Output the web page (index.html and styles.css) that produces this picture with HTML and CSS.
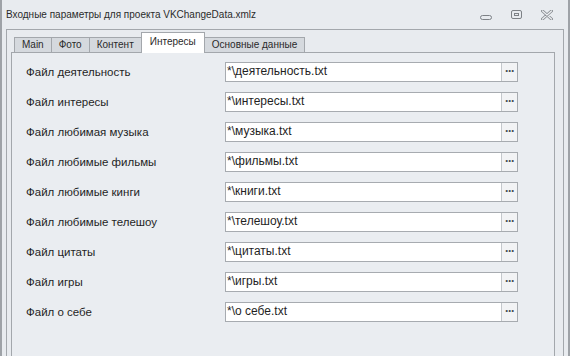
FILE: index.html
```html
<!DOCTYPE html>
<html lang="ru">
<head>
  <meta charset="UTF-8">
  <title>Входные параметры для проекта VKChangeData.xmlz</title>
  <link rel="stylesheet" href="styles.css">
</head>
<body>

<div class="window">
  <div class="titlebar">
    <span class="title">Входные параметры для проекта VKChangeData.xmlz</span>
    <div class="controls">
      <svg class="ctl ctl-min" width="12" height="6" viewBox="0 0 12 6">
        <rect x="0.5" y="0.5" width="11" height="4" rx="2" fill="none" stroke="#7d8186"/>
      </svg>
      <svg class="ctl ctl-max" width="11" height="9" viewBox="0 0 11 9">
        <rect x="0.5" y="0.5" width="10" height="8" rx="1.5" fill="none" stroke="#7d8186"/>
        <rect x="3.5" y="3.5" width="4" height="2" fill="none" stroke="#7d8186"/>
      </svg>
      <svg class="ctl ctl-close" width="12" height="10" viewBox="0 0 12 10">
        <path d="M1.5 1 L10.5 9 M10.5 1 L1.5 9" stroke="#8a8e93" stroke-width="3" stroke-linecap="round"/>
        <path d="M1.5 1 L10.5 9 M10.5 1 L1.5 9" stroke="#eef0f3" stroke-width="1.2" stroke-linecap="round"/>
      </svg>
    </div>
  </div>

  <div class="frame">
    <div class="tabs">
      <div class="tab">Main</div>
      <div class="tab">Фото</div>
      <div class="tab">Контент</div>
      <div class="tab active">Интересы</div>
      <div class="tab">Основные данные</div>
    </div>

    <div class="page">
      <div class="row">
        <span class="label">Файл деятельность</span>
        <div class="field"><span class="value">*\деятельность.txt</span><span class="browse">···</span></div>
      </div>
      <div class="row">
        <span class="label">Файл интересы</span>
        <div class="field"><span class="value">*\интересы.txt</span><span class="browse">···</span></div>
      </div>
      <div class="row">
        <span class="label">Файл любимая музыка</span>
        <div class="field"><span class="value">*\музыка.txt</span><span class="browse">···</span></div>
      </div>
      <div class="row">
        <span class="label">Файл любимые фильмы</span>
        <div class="field"><span class="value">*\фильмы.txt</span><span class="browse">···</span></div>
      </div>
      <div class="row">
        <span class="label">Файл любимые кинги</span>
        <div class="field"><span class="value">*\книги.txt</span><span class="browse">···</span></div>
      </div>
      <div class="row">
        <span class="label">Файл любимые телешоу</span>
        <div class="field"><span class="value">*\телешоу.txt</span><span class="browse">···</span></div>
      </div>
      <div class="row">
        <span class="label">Файл цитаты</span>
        <div class="field"><span class="value">*\цитаты.txt</span><span class="browse">···</span></div>
      </div>
      <div class="row">
        <span class="label">Файл игры</span>
        <div class="field"><span class="value">*\игры.txt</span><span class="browse">···</span></div>
      </div>
      <div class="row">
        <span class="label">Файл о себе</span>
        <div class="field"><span class="value">*\о себе.txt</span><span class="browse">···</span></div>
      </div>
    </div>
  </div>
</div>

</body>
</html>
```

FILE: styles.css
```css
* {
  margin: 0;
  padding: 0;
  box-sizing: border-box;
}

body {
  width: 570px;
  height: 356px;
  overflow: hidden;
  font-family: 'Liberation Sans', Arial, sans-serif;
  font-size: 12px;
  color: #1f1f1f;
  background: #e8ebef;
}

.window {
  height: 356px;
  display: flex;
  flex-direction: column;
  border-left: 2px solid #9ea2a7;
  border-right: 2px solid #9ea2a7;
  background: #e8ebef;
}

/* Title bar */
.titlebar {
  height: 29px;
  flex-shrink: 0;
  display: flex;
  align-items: center;
  justify-content: space-between;
  padding: 0 15px 0 4px;
}

.title {
  font-size: 10px;
  color: #2b2b2b;
  padding-bottom: 1px;
}

.controls {
  display: flex;
  align-items: center;
  gap: 19px;
}

.ctl-min {
  margin-top: 6px;
}

/* Outer group frame */
.frame {
  flex: 1;
  display: flex;
  flex-direction: column;
  margin: 0 4px;
  border: 1px solid #a3a7ac;
  border-bottom: none;
  padding: 3px 8px 0 4px;
}

/* Tabs */
.tabs {
  display: flex;
  align-items: flex-end;
  height: 20px;
  margin: 0 0 -1px 3px;
  position: relative;
  z-index: 1;
}

.tab {
  height: 16px;
  padding: 0 7px;
  font-size: 10px;
  line-height: 14px;
  background: #d5d9de;
  border: 1px solid #a3a7ac;
  color: #2a2a2a;
  white-space: nowrap;
}

.tab + .tab {
  margin-left: -1px;
}

.tab.active {
  height: 21px;
  line-height: 18px;
  background: #ffffff;
  border-bottom: none;
  padding: 0 8px;
}

/* Tab page */
.page {
  flex: 1;
  border: 1px solid #a3a7ac;
  border-bottom: none;
  background: #eaedf1;
  padding: 9px 0 0 14px;
}

.row {
  display: flex;
  align-items: center;
  height: 20px;
  margin-bottom: 10px;
}

.label {
  width: 199px;
  flex-shrink: 0;
  font-size: 11.5px;
}

.field {
  width: 293px;
  height: 20px;
  display: flex;
  border: 1px solid #a7abb0;
  background: #ffffff;
}

.value {
  flex: 1;
  padding-left: 1px;
  line-height: 17px;
  white-space: nowrap;
  overflow: hidden;
}

.browse {
  width: 16px;
  border-left: 1px solid #c3c7cc;
  background: #f2f3f5;
  font-size: 12px;
  font-weight: bold;
  line-height: 16px;
  text-align: center;
  color: #444a52;
  letter-spacing: -1px;
}
```
